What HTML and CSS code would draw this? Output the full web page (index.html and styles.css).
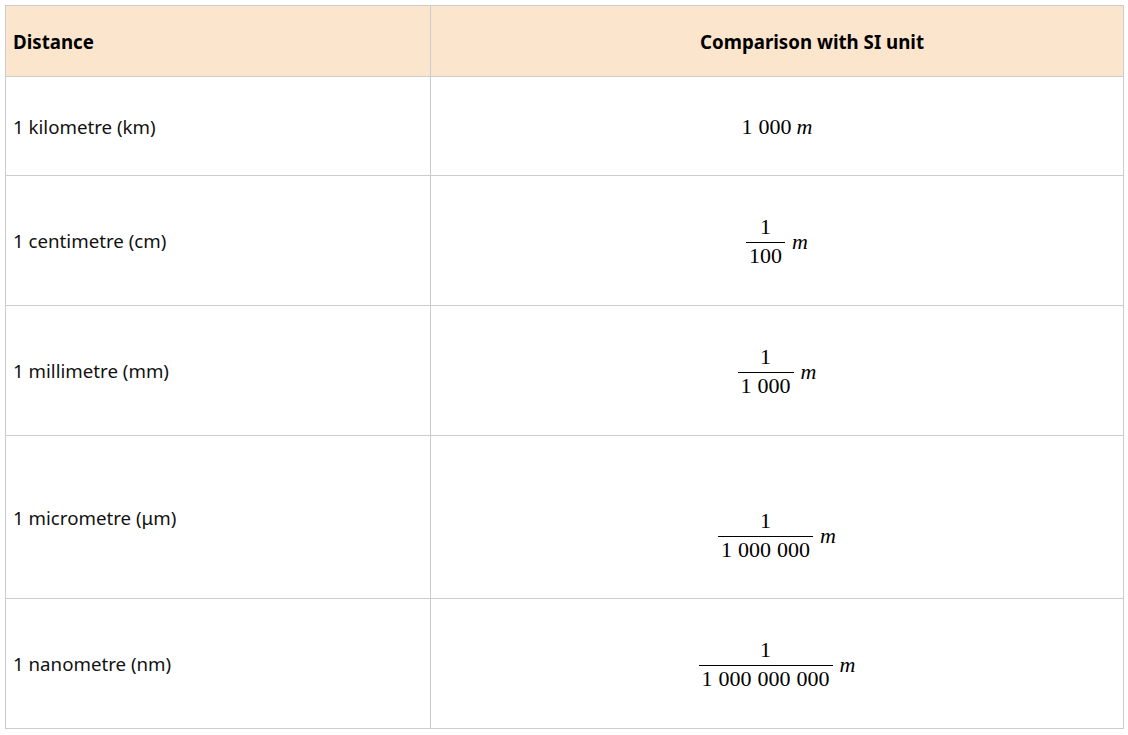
FILE: index.html
```html
<!DOCTYPE html>
<html>
<head>
<meta charset="utf-8">
<link rel="stylesheet" href="styles.css">
</head>
<body>
<table class="units">
  <thead>
    <tr class="head-row">
      <th class="c1">Distance</th>
      <th class="c2">Comparison with SI unit</th>
    </tr>
  </thead>
  <tbody>
    <tr class="r1">
      <td class="c1">1 kilometre (km)</td>
      <td class="c2"><span class="math"><span class="plain">1 000</span><i>m</i></span></td>
    </tr>
    <tr class="r2">
      <td class="c1">1 centimetre (cm)</td>
      <td class="c2"><span class="math"><span class="frac"><span class="num">1</span><span class="den">100</span></span><i>m</i></span></td>
    </tr>
    <tr class="r3">
      <td class="c1">1 millimetre (mm)</td>
      <td class="c2"><span class="math"><span class="frac"><span class="num">1</span><span class="den">1 000</span></span><i>m</i></span></td>
    </tr>
    <tr class="r4">
      <td class="c1">1 micrometre (μm)</td>
      <td class="c2 low"><span class="math"><span class="frac"><span class="num">1</span><span class="den">1 000 000</span></span><i>m</i></span></td>
    </tr>
    <tr class="r5">
      <td class="c1">1 nanometre (nm)</td>
      <td class="c2"><span class="math"><span class="frac"><span class="num">1</span><span class="den">1 000 000 000</span></span><i>m</i></span></td>
    </tr>
  </tbody>
</table>
</body>
</html>
```
FILE: styles.css
```css
html, body {
  margin: 0;
  padding: 0;
  background: #ffffff;
}
body {
  padding: 5px 4px 0 5px;
  font-family: "Noto Sans", "Open Sans", sans-serif;
  font-size: 18.7px;
  color: #111111;
}
.units {
  border-collapse: collapse;
  width: 1119px;
  table-layout: fixed;
}
.units th, .units td {
  border: 1px solid #cccccc;
  padding: 0 7px;
  vertical-align: middle;
}
.units th {
  font-weight: 700;
  background: #fce5cd;
  color: #000000;
  height: 70px;
}
.c1 {
  width: 410px;
  text-align: left;
}
.units td.c2 {
  text-align: center;
}
.units th.c2 {
  text-align: center;
  padding-left: 77px;
}
.r1 td { height: 98px; }
.r2 td, .r3 td, .r5 td { height: 129px; }
.r4 td { height: 162px; }
.units td.low {
  height: 127px;
  padding-top: 35px;
}
.math {
  font-family: "Liberation Serif", "DejaVu Serif", serif;
  font-size: 22px;
  line-height: 1;
  color: #000000;
  display: inline-flex;
  align-items: center;
  gap: 7px;
  word-spacing: 0.5px;
}
.math i {
  font-size: 22px;
}
.plain + i {
  margin-left: -2px;
}
.frac {
  display: inline-flex;
  flex-direction: column;
  align-items: center;
  line-height: 1;
}
.num {
  padding: 0 3px 4px;
}
.den {
  border-top: 1px solid #000000;
  padding: 2px 3px 0;
}
```
